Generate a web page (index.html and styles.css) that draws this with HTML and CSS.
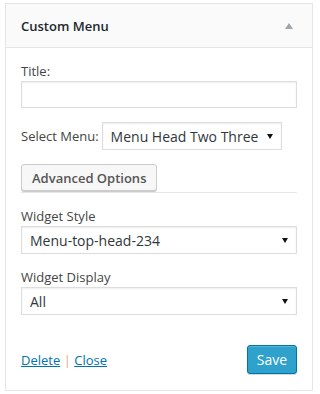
FILE: index.html
```html
<!DOCTYPE html>
<html>
<head>
    <title>Custom Menu Widget</title>
    <link rel="stylesheet" href="styles.css">
</head>
<body>
    <div class="widget">
        <div class="widget-top">
            <h3 class="widget-title">Custom Menu</h3>
            <span class="toggle-arrow"></span>
        </div>

        <div class="widget-inside">
            <div class="field">
                <label for="title">Title:</label>
                <input type="text" id="title" class="text-input">
            </div>

            <div class="field inline">
                <label for="navMenu">Select Menu:</label>
                <div class="select-wrap">
                    <select id="navMenu" class="menu-select">
                        <option>Menu Head Two Three</option>
                    </select>
                </div>
            </div>

            <div class="advanced">
                <button class="button">Advanced Options</button>
            </div>

            <div class="field">
                <label for="widgetStyle">Widget Style</label>
                <div class="select-wrap">
                    <select id="widgetStyle">
                        <option>Menu-top-head-234</option>
                    </select>
                </div>
            </div>

            <div class="field">
                <label for="widgetDisplay">Widget Display</label>
                <div class="select-wrap">
                    <select id="widgetDisplay">
                        <option>All</option>
                    </select>
                </div>
            </div>

            <div class="widget-control-actions">
                <div class="links">
                    <a href="#">Delete</a> <span class="sep">|</span> <a href="#">Close</a>
                </div>
                <button class="button button-primary">Save</button>
            </div>
        </div>
    </div>
</body>
</html>
```

FILE: styles.css
```css
body {
    margin: 0;
    background: #fff;
    font-family: "Open Sans", "Liberation Sans", sans-serif;
    font-size: 13px;
    color: #444;
}

.widget {
    margin: 3px 0 0 5px;
    width: 308px;
    box-sizing: border-box;
    border: 1px solid #e5e5e5;
    background: #fff;
}

.widget-top {
    display: flex;
    align-items: center;
    justify-content: space-between;
    height: 43px;
    padding: 0 19px 0 15px;
    background: #fafafa;
    border-bottom: 1px solid #e5e5e5;
}

.widget-title {
    margin: 0;
    font-size: 13px;
    font-weight: 600;
    color: #23282d;
}

.toggle-arrow {
    width: 0;
    height: 0;
    border-left: 4px solid transparent;
    border-right: 4px solid transparent;
    border-bottom: 6px solid #a0a5aa;
    margin-top: 1px;
}

.widget-inside {
    padding: 0 15px 16px;
}

.field {
    margin-top: 14px;
}

.field label {
    display: block;
    line-height: 19px;
    color: #444;
}

.field.inline {
    display: flex;
    align-items: center;
}

.field.inline label {
    display: inline-block;
    margin-right: 3px;
}

.text-input {
    display: block;
    width: 100%;
    height: 27px;
    box-sizing: border-box;
    border: 1px solid #ddd;
    box-shadow: inset 0 1px 2px rgba(0, 0, 0, 0.07);
    margin: 0;
}

.select-wrap {
    position: relative;
}

.select-wrap::after {
    content: "";
    position: absolute;
    right: 9px;
    top: 12px;
    border-left: 3px solid transparent;
    border-right: 3px solid transparent;
    border-top: 5px solid #111;
    pointer-events: none;
}

select {
    display: block;
    width: 100%;
    height: 28px;
    box-sizing: border-box;
    appearance: none;
    -webkit-appearance: none;
    border: 1px solid #ddd;
    border-radius: 0;
    background: #fff;
    padding: 0 8px;
    font-family: "Open Sans", "Liberation Sans", sans-serif;
    font-size: 14px;
    color: #32373c;
    box-shadow: inset 0 1px 2px rgba(0, 0, 0, 0.07);
}

.menu-select {
    width: 180px;
}

.advanced {
    display: flex;
    margin-top: 14px;
    border-bottom: 1px solid #e5e5e5;
}

.button {
    height: 28px;
    padding: 0 10px;
    white-space: nowrap;
    font-family: "Open Sans", "Liberation Sans", sans-serif;
    font-size: 13px;
    font-weight: 600;
    color: #555;
    background: #f7f7f7;
    border: 1px solid #ccc;
    border-radius: 3px;
    box-shadow: 0 1px 0 #ccc;
    cursor: pointer;
}

.advanced .button {
    height: 27px;
    margin-bottom: 1px;
}

.widget-control-actions {
    display: flex;
    justify-content: space-between;
    align-items: center;
    margin-top: 30px;
}

.links a {
    color: #0073aa;
    text-decoration: underline;
}

.sep {
    color: #e0b070;
}

.button-primary {
    width: 50px;
    height: 29px;
    padding: 0;
    font-weight: 400;
    font-size: 14px;
    color: #fff;
    background: #2ea2cc;
    border-color: #0074a2;
    box-shadow: inset 0 1px 0 rgba(120, 200, 230, 0.5), 0 1px 0 rgba(0, 0, 0, 0.15);
}
```
